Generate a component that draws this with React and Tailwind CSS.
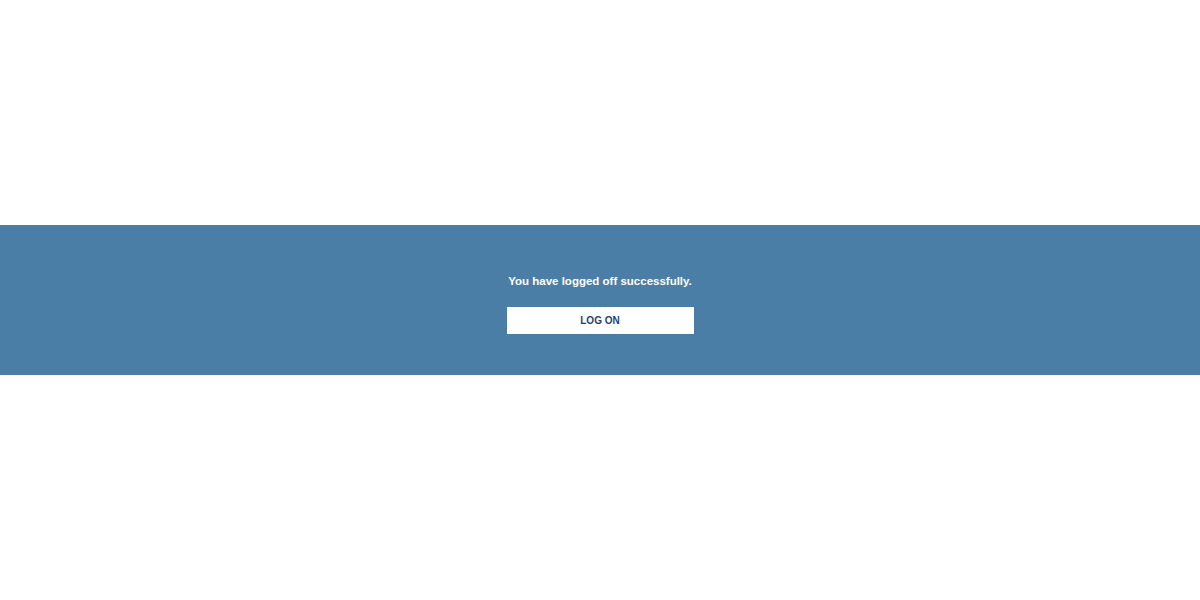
import React from "react";

export default function App() {
  return (
    <div className="min-h-screen w-full bg-white flex flex-col justify-center font-['Liberation_Sans',Arial,sans-serif]">
      <div className="h-[150px] w-full bg-[#4a7ea6] flex flex-col items-center pt-[48px]">
        <p className="text-[11.5px] leading-[16px] font-bold text-white">
          You have logged off successfully.
        </p>
        <button className="mt-[18px] w-[187px] h-[27px] bg-white text-[#1f3f73] text-[10px] font-bold uppercase">
          LOG ON
        </button>
      </div>
    </div>
  );
}
